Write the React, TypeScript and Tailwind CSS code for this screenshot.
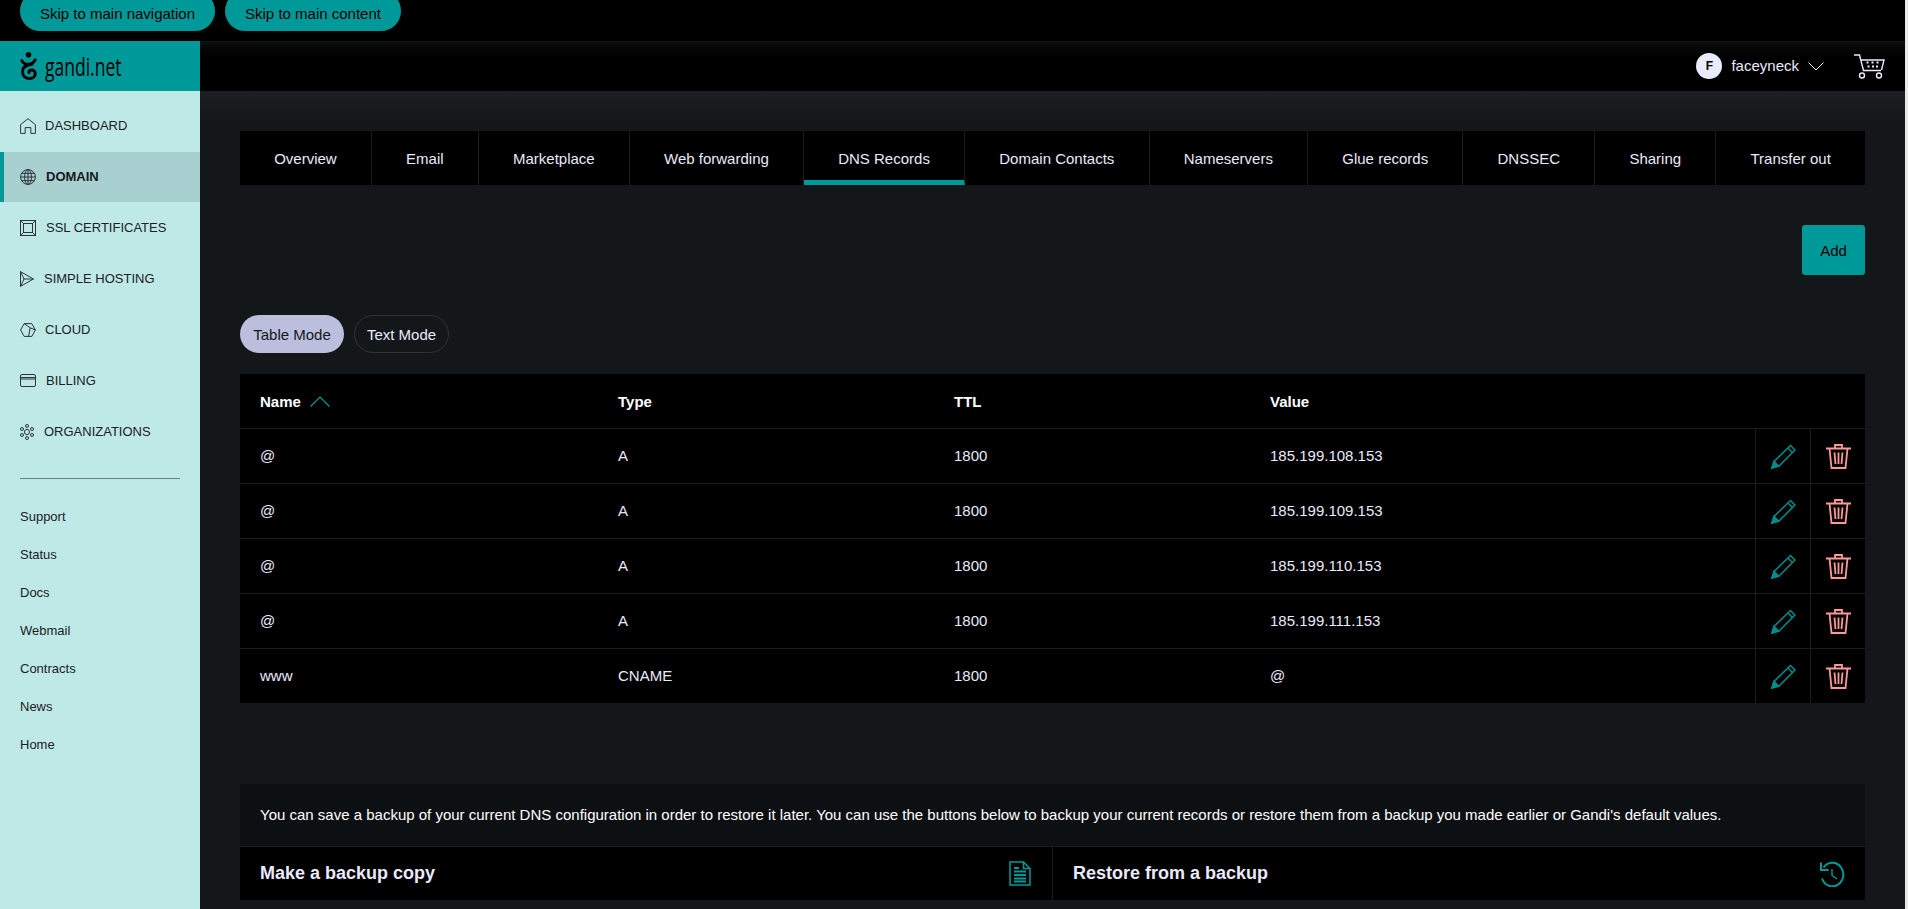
const tabs = [
  "Overview",
  "Email",
  "Marketplace",
  "Web forwarding",
  "DNS Records",
  "Domain Contacts",
  "Nameservers",
  "Glue records",
  "DNSSEC",
  "Sharing",
  "Transfer out",
];

const records = [
  { name: "@", type: "A", ttl: "1800", value: "185.199.108.153" },
  { name: "@", type: "A", ttl: "1800", value: "185.199.109.153" },
  { name: "@", type: "A", ttl: "1800", value: "185.199.110.153" },
  { name: "@", type: "A", ttl: "1800", value: "185.199.111.153" },
  { name: "www", type: "CNAME", ttl: "1800", value: "@" },
];

const secondaryLinks = ["Support", "Status", "Docs", "Webmail", "Contracts", "News", "Home"];

function HomeIcon() {
  return (
    <svg width="16" height="16" viewBox="0 0 16 16" fill="none" stroke="#2c3538" strokeWidth="1">
      <path d="M.6 15.4V6.600L8 .7l7.400 5.900v8.800h-4.600V9.600H5.200v5.800z" />
    </svg>
  );
}

function GlobeIcon() {
  return (
    <svg width="16" height="16" viewBox="0 0 16 16" fill="none" stroke="#2c3538" strokeWidth="1">
      <circle cx="8" cy="8" r="7.400" />
      <ellipse cx="8" cy="8" rx="3.400" ry="7.400" />
      <path d="M8 .6v14.800M.6 8h14.800M1.600 4.400h12.800M1.600 11.600h12.800" />
    </svg>
  );
}

function CertIcon() {
  return (
    <svg width="16" height="16" viewBox="0 0 16 16" fill="none" stroke="#2c3538" strokeWidth="1">
      <rect x=".5" y=".5" width="15" height="15" />
      <rect x="3.500" y="3.500" width="9" height="9" />
      <path d="M.5.5l3 3M15.500.5l-3 3M.5 15.500l3-3M15.500 15.500l-3-3" />
    </svg>
  );
}

function SendIcon() {
  return (
    <svg width="14" height="16" viewBox="0 0 14 16" fill="none" stroke="#2c3538" strokeWidth="1">
      <path d="M.5.6L13.400 8 .5 15.400zM.5.6L4 8 .5 15.400M4 8h9.400" />
    </svg>
  );
}

function CubeIcon() {
  return (
    <svg width="16" height="14" viewBox="0 0 16 14" fill="none" stroke="#2c3538" strokeWidth="1">
      <path d="M.6 7L4.200.6h7.600L15.400 7l-3.600 6.400H4.200zM4.200.6l6 4.200-1.600 8.600M10.200 4.800l5.200 2.200" />
    </svg>
  );
}

function CardIcon() {
  return (
    <svg width="16" height="13" viewBox="0 0 16 13" fill="none" stroke="#2c3538" strokeWidth="1">
      <rect x=".5" y=".5" width="15" height="12" rx="1.500" />
      <path d="M.5 3.500h15M.5 5h15" />
    </svg>
  );
}

function OrgIcon() {
  return (
    <svg width="14" height="16" viewBox="0 0 14 16" fill="none" stroke="#2c3538" strokeWidth="1">
      <circle cx="7" cy="8" r="2.600" />
      <circle cx="7" cy="2" r="1.500" />
      <circle cx="7" cy="14" r="1.500" />
      <circle cx="2" cy="5" r="1.500" />
      <circle cx="12" cy="5" r="1.500" />
      <circle cx="2" cy="11" r="1.500" />
      <circle cx="12" cy="11" r="1.500" />
    </svg>
  );
}

function GandiMark() {
  return (
    <svg width="17" height="28" viewBox="0 0 17 28" fill="none" stroke="#000" strokeLinecap="round">
      <circle cx="8.500" cy="2.800" r="2.800" fill="#000" stroke="none" />
      <path
        d="M1.800 8.500c1.200 2.700 3.500 3.700 6.200 3.700 3 0 5.700-1.400 7.200-4.400M12 12.200c-5.500.6-9.500 3-9.500 7.300 0 4.400 3.200 7 7 7 3.600 0 5.800-2.200 5.800-4.700 0-2.300-1.700-3.700-3.500-3.700-1.700 0-2.900 1.100-2.900 2.400"
        strokeWidth="3"
      />
    </svg>
  );
}

function CartIcon() {
  return (
    <svg width="31" height="25" viewBox="0 0 31 25" fill="none" stroke="#e8ebfb" strokeWidth="1.400">
      <path d="M0 1h5.500l4 15.500h17.500M7 6h23l-2.500 10" />
      <circle cx="8" cy="21.500" r="2.500" />
      <circle cx="25" cy="21.500" r="2.500" />
      <path d="M12.500 8.500h2M17.500 8.500h2M22.500 8.500h2M13.500 12.500h2M18 12.500h2M22 12.500h2" strokeWidth="2" />
    </svg>
  );
}

function PencilIcon() {
  return (
    <svg width="25" height="25" viewBox="0 0 25 25" fill="none" stroke="#008c8c" strokeWidth="1.500">
      <path d="M1 24l2-6.500L19.500 1.500l4.500 4.500L8 22z" />
      <path d="M17 4l4.500 4.500" />
      <path d="M1 24l2-6.500 4.500 4.500z" fill="#008c8c" />
    </svg>
  );
}

function TrashIcon() {
  return (
    <svg width="25" height="25" viewBox="0 0 25 25" fill="none" stroke="#ff9999" strokeWidth="1.800">
      <path d="M0 4.500h25M9 4.500V1h7v3.500M3.500 4.500l2 19.500h14l2-19.500" />
      <path d="M8.500 8.500l1 11.500M12.500 8.500V20M16.500 8.500l-1 11.500" />
    </svg>
  );
}

function FileIcon() {
  return (
    <svg width="22" height="25" viewBox="0 0 22 25" fill="none" stroke="#009999" strokeWidth="1.500">
      <path d="M1 1h13.500l6.500 6.500V24H1zM14.500 1v6.500H21" />
      <path d="M5 7h5M5 10.500h12M5 14h12M5 17.500h12M5 20.500h12" strokeWidth="1.800" />
    </svg>
  );
}

function HistoryIcon() {
  return (
    <svg width="25" height="26" viewBox="0 0 25 26" fill="none" stroke="#009999" strokeWidth="2">
      <path d="M3.500 6.500A11 11.800 0 1 1 2 17.500" />
      <path d="M1 1.500v7.500h7.500" />
      <path d="M12 8v6.500l5 3.500" strokeWidth="1.400" />
    </svg>
  );
}

const navItems = [
  { label: "DASHBOARD", icon: <HomeIcon />, gap: "ml-[9px]" },
  { label: "DOMAIN", icon: <GlobeIcon />, gap: "ml-[10px]", active: true },
  { label: "SSL CERTIFICATES", icon: <CertIcon />, gap: "ml-[10px]" },
  { label: "SIMPLE HOSTING", icon: <SendIcon />, gap: "ml-[10px]" },
  { label: "CLOUD", icon: <CubeIcon />, gap: "ml-[9px]" },
  { label: "BILLING", icon: <CardIcon />, gap: "ml-[10px]" },
  { label: "ORGANIZATIONS", icon: <OrgIcon />, gap: "ml-[10px]" },
];

const rowGrid = "grid grid-cols-[358px_336px_316px_505px_55px_55px] h-[55px] items-center border-b border-[#1a1d1f]";

export default function App() {
  return (
    <div className="flex h-[909px] overflow-hidden bg-black font-['Liberation_Sans',Arial,sans-serif] text-[15px]">
      <div className="flex w-[1905px] flex-col">
        {/* Skip links, clipped by the top of the page */}
        <div className="flex h-[41px] items-end gap-[10px] overflow-hidden bg-black pb-[10px] pl-[20px]">
          <a className="flex h-[40px] w-[195px] shrink-0 items-center justify-center rounded-[20px] bg-[#009999] text-black">
            <span className="mt-[7px]">Skip to main navigation</span>
          </a>
          <a className="flex h-[40px] w-[176px] shrink-0 items-center justify-center rounded-[20px] bg-[#009999] text-black">
            <span className="mt-[7px]">Skip to main content</span>
          </a>
        </div>

        <div className="flex min-h-0 flex-1">
          {/* Sidebar */}
          <aside className="flex w-[200px] shrink-0 flex-col bg-[#bfe9e7] text-[#1b2124]">
            <div className="flex h-[50px] items-center gap-[8px] bg-[#009999] pl-[20px]">
              <GandiMark />
              <span className="origin-left scale-x-[0.7] font-['Open_Sans',sans-serif] text-[25px] leading-none text-black">
                gandi.net
              </span>
            </div>
            <nav className="pt-[9px]">
              {navItems.map((item) => (
                <a
                  key={item.label}
                  className={
                    item.active
                      ? "mt-px flex h-[50px] items-center border-l-4 border-[#009999] bg-[#a9d0d0] pl-[16px] text-[13px] font-bold text-[#14191b]"
                      : "flex h-[51px] items-center pl-[20px] text-[13px]"
                  }
                >
                  {item.icon}
                  <span className={item.gap}>{item.label}</span>
                </a>
              ))}
            </nav>
            <div className="mx-[20px] mt-[21px] h-px bg-[#6d7c7f]" />
            <div className="mt-[19px] flex flex-col">
              {secondaryLinks.map((link) => (
                <a key={link} className="flex h-[38px] items-center pl-[20px] text-[13px]">
                  {link}
                </a>
              ))}
            </div>
          </aside>

          <div className="flex min-w-0 flex-1 flex-col">
            {/* Top bar */}
            <header className="flex h-[50px] shrink-0 items-center justify-end bg-gradient-to-b from-[#101112] via-black to-black pr-[20px] text-[#e8ebfb]">
              <div className="flex h-[26px] w-[26px] items-center justify-center rounded-full bg-[#e8ebfb] text-[12px] font-bold text-black">
                F
              </div>
              <span className="ml-[9px] text-[15px]">faceyneck</span>
              <svg className="ml-[9px]" width="16" height="9" viewBox="0 0 16 9" fill="none" stroke="#e8ebfb" strokeWidth="1">
                <path d="M.5.5L8 8l7.500-7.500" />
              </svg>
              <div className="ml-[30px]">
                <CartIcon />
              </div>
            </header>

            <main className="flex-1 bg-[linear-gradient(#1c2023,#13171a_30px)] px-[40px] pt-[40px] text-[#e8ebfb]">
              {/* Tabs */}
              <div className="flex h-[54px] bg-black">
                {tabs.map((tab) => (
                  <a
                    key={tab}
                    className={
                      tab === "DNS Records"
                        ? "flex flex-auto items-center justify-center whitespace-nowrap border-r border-[#1a1d1f] border-b-[5px] border-b-[#009999] pt-[7px]"
                        : "flex flex-auto items-center justify-center whitespace-nowrap border-r border-[#1a1d1f] pt-[2px] last:border-r-0"
                    }
                  >
                    {tab}
                  </a>
                ))}
              </div>

              <div className="mt-[40px] flex justify-end">
                <button className="h-[50px] w-[63px] rounded-[3px] bg-[#009999] pt-[2px] text-black">Add</button>
              </div>

              {/* Mode switch */}
              <div className="mt-[40px] flex gap-[10px]">
                <button className="h-[38px] w-[104px] rounded-[19px] bg-[#bbbfdd] pt-[2px] text-[#14191b]">Table Mode</button>
                <button className="h-[38px] w-[95px] rounded-[19px] border border-[#2f3336] pt-[2px]">Text Mode</button>
              </div>

              {/* Records */}
              <div className="mt-[21px] bg-black">
                <div className={`${rowGrid} pt-[2px] font-bold text-white`}>
                  <div className="flex items-center gap-[9px] pl-[20px]">
                    Name
                    <svg className="mb-[2px]" width="20" height="11" viewBox="0 0 20 11" fill="none" stroke="#009999" strokeWidth="1.200">
                      <path d="M.5 10.500L10 1l9.500 9.500" />
                    </svg>
                  </div>
                  <div className="pl-[20px]">Type</div>
                  <div className="pl-[20px]">TTL</div>
                  <div className="pl-[20px]">Value</div>
                </div>
                {records.map((record, i) => (
                  <div key={i} className={`${rowGrid} last:h-[54px] last:border-b-0`}>
                    <div className="pl-[20px]">{record.name}</div>
                    <div className="pl-[20px]">{record.type}</div>
                    <div className="pl-[20px]">{record.ttl}</div>
                    <div className="pl-[20px]">{record.value}</div>
                    <div className="flex h-full items-center justify-center border-l border-[#1a1d1f]">
                      <PencilIcon />
                    </div>
                    <div className="flex h-full items-center justify-center border-l border-[#1a1d1f]">
                      <TrashIcon />
                    </div>
                  </div>
                ))}
              </div>

              {/* Backup */}
              <div className="mt-[81px]">
                <div className="flex h-[62px] items-center bg-[#0d1012] pl-[20px] text-white">
                  You can save a backup of your current DNS configuration in order to restore it later. You can use the buttons below to backup your current records or restore them from a backup you made earlier or Gandi's default values.
                </div>
                <div className="grid h-[54px] grid-cols-[813px_1fr] border-t border-[#1a1d1f] bg-black text-[18px] font-bold">
                  <div className="flex items-center justify-between border-r border-[#1a1d1f] pl-[20px] pr-[21px]">
                    Make a backup copy
                    <FileIcon />
                  </div>
                  <div className="flex items-center justify-between pl-[20px] pr-[20px]">
                    Restore from a backup
                    <HistoryIcon />
                  </div>
                </div>
              </div>
            </main>
          </div>
        </div>
      </div>
      <div className="w-[3px] bg-[#e8e8e8]" />
    </div>
  );
}
